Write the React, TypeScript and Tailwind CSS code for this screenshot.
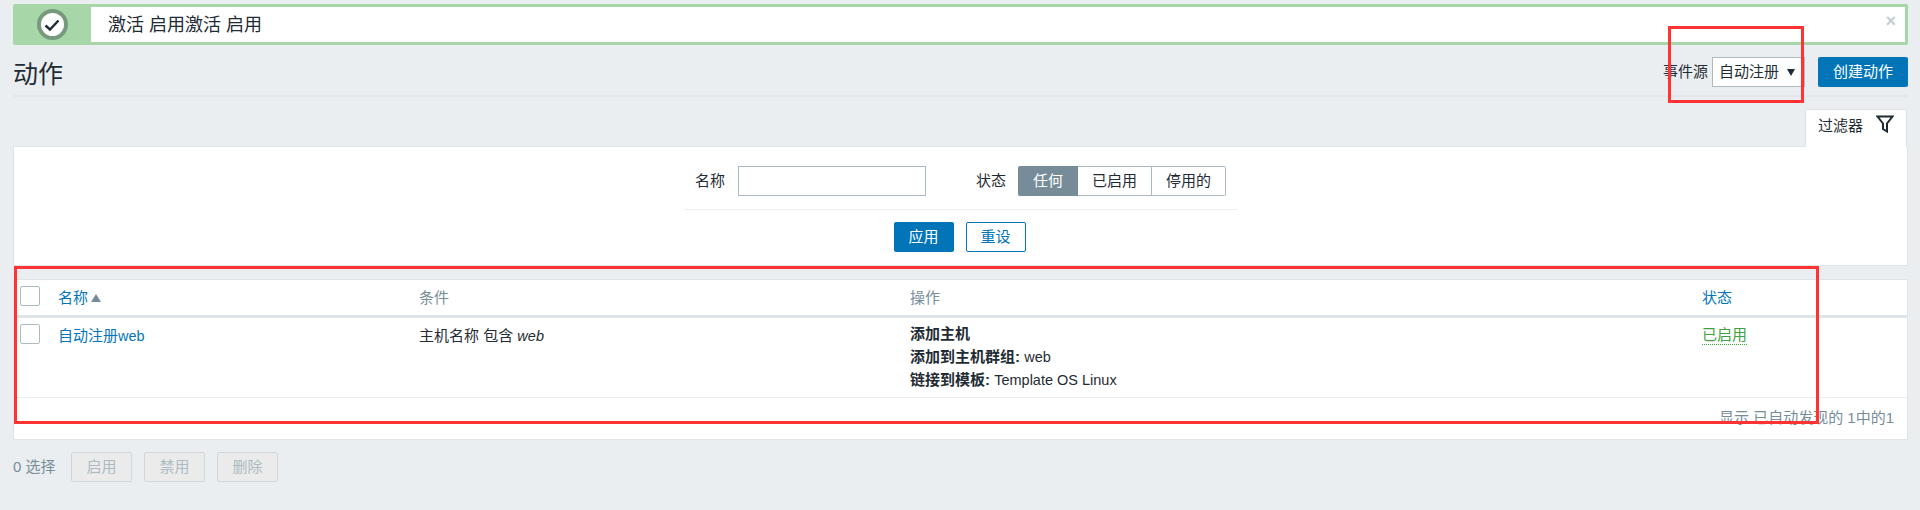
import React from 'react';

const font = "font-['Liberation_Sans','Noto_Sans_CJK_SC',sans-serif]";

function Checkbox() {
  return <div className="w-5 h-5 bg-white border border-[#acbbc2] rounded-[2px]" />;
}

function MessageBar() {
  return (
    <div className="h-[41px] mt-1 flex bg-[#a7d7a9] rounded-[2px] p-[3px] pl-0">
      <div className="w-[78px] shrink-0 flex items-center justify-center">
        <div className="w-[31px] h-[31px] rounded-full bg-white border-[4px] border-[#789a7c] flex items-center justify-center">
          <svg width="16" height="14" viewBox="0 0 16 14" fill="none" stroke="#1f2c33" strokeWidth="2.4">
            <path d="M1.5 7.5 L6 11.5 L14.5 2.5" />
          </svg>
        </div>
      </div>
      <div className="relative flex-1 bg-white flex items-center pl-[17px] pt-px text-[18px] text-[#1f2c33]">
        激活 启用激活 启用
        <span className="absolute right-[9px] top-[5px] text-[#c5ced3] text-[18px] font-bold leading-none">×</span>
      </div>
    </div>
  );
}

function PageHeader() {
  return (
    <div className="h-[52px] border-b-2 border-[#e3e7ea] flex items-start justify-between pt-3">
      <h1 className="text-[25px] leading-[32px] text-[#1f2c33] font-normal mt-px">动作</h1>
      <div className="flex items-center">
        <span className="text-[15px] text-[#1f2c33] mr-1">事件源</span>
        <div className="w-[93px] h-[30px] bg-white border border-[#acbbc2] flex items-center justify-between pl-[6px] pr-[9px] text-[15px] text-[#1f2c33]">
          自动注册
          <span className="w-0 h-0 border-x-[4px] border-x-transparent border-t-[7px] border-t-[#1f2c33]" />
        </div>
        <button className="ml-[13px] w-[90px] h-[30px] bg-[#0275b8] text-white text-[15px] rounded-[2px]">创建动作</button>
      </div>
    </div>
  );
}

function FilterPanel() {
  return (
    <div>
      <div className="flex justify-end pr-px -mb-px relative">
        <div className="w-[102px] h-[38px] bg-white border-t border-x border-[#dfe4e7] rounded-t-[2px] flex items-start pt-[5px] pl-3 gap-[13px] text-[15px] text-[#1f2c33]">
          过滤器
          <svg width="18" height="18" viewBox="0 0 18 18" fill="none" stroke="#1f2c33" strokeWidth="2">
            <path d="M1.5 1.5 H16.5 L11 8.5 V16.5 L7 14 V8.5 Z" />
          </svg>
        </div>
      </div>
      <div className="h-[120px] bg-white border border-[#dfe4e7] flex flex-col items-center pt-[19px]">
        <div className="w-[553px] h-[44px] pl-[11px] border-b border-[#ebeef0] flex items-start text-[15px] text-[#1f2c33]">
          <div className="h-[30px] flex items-center gap-[13px]">
            <span>名称</span>
            <div className="w-[188px] h-[30px] bg-white border border-[#acbbc2]" />
          </div>
          <div className="h-[30px] flex items-center ml-[50px] gap-3">
            <span>状态</span>
            <div className="flex h-[30px]">
              <div className="w-[60px] bg-[#768d99] text-white flex items-center justify-center rounded-l-[2px]">任何</div>
              <div className="w-[74px] border-y border-r border-[#acbbc2] flex items-center justify-center">已启用</div>
              <div className="w-[74px] border-y border-r border-[#acbbc2] flex items-center justify-center rounded-r-[2px]">停用的</div>
            </div>
          </div>
        </div>
        <div className="flex gap-3 mt-3 pr-[2px] text-[15px]">
          <button className="w-[60px] h-[30px] bg-[#0275b8] text-white rounded-[2px]">应用</button>
          <button className="w-[60px] h-[30px] bg-white text-[#0275b8] border border-[#0275b8] rounded-[2px]">重设</button>
        </div>
      </div>
    </div>
  );
}

function ActionTable() {
  const cols = 'grid grid-cols-[44px_361px_491px_792px_1fr]';
  return (
    <div className="mt-[13px] bg-white border border-[#dfe4e7] text-[15px]">
      <div className={`${cols} h-[38px] border-b-[3px] border-[#dfe4e7]`}>
        <div className="pl-[6px] pt-[6px]"><Checkbox /></div>
        <div className="pt-[7px] text-[#0275b8] flex items-start gap-[3px]">
          名称
          <span className="mt-[7px] w-0 h-0 border-x-[5px] border-x-transparent border-b-[8px] border-b-[#768d99]" />
        </div>
        <div className="pt-[7px] text-[#768d99]">条件</div>
        <div className="pt-[7px] text-[#768d99]">操作</div>
        <div className="pt-[7px] text-[#0275b8]">状态</div>
      </div>
      <div className={`${cols} h-[80px] border-b border-[#ebeef0] text-[#1f2c33]`}>
        <div className="pl-[6px] pt-[6px]"><Checkbox /></div>
        <div className="pt-[7px] text-[#0275b8]">自动注册<span className="text-[14.5px]">web</span></div>
        <div className="pt-[7px]">主机名称 包含 <em className="text-[14.5px]">web</em></div>
        <div className="pt-[6px] leading-[23px] -mt-[2px]">
          <div className="font-bold">添加主机</div>
          <div><span className="font-bold">添加到主机群组:</span> <span className="text-[14.5px]">web</span></div>
          <div className="-mt-px"><span className="font-bold">链接到模板:</span> <span className="text-[14.5px]">Template OS Linux</span></div>
        </div>
        <div className="pt-[6px]">
          <span className="text-[#3fa142] border-b border-dotted border-[#3fa142] pb-px">已启用</span>
        </div>
      </div>
      <div className="h-[41px] flex items-center justify-end pr-[13px] text-[#768d99]">显示 已自动发现的 1中的1</div>
    </div>
  );
}

function BulkBar() {
  return (
    <div className="mt-3 flex items-center text-[15px] text-[#768d99]">
      <span className="w-[58px]">0 选择</span>
      {['启用', '禁用', '删除'].map((label) => (
        <button key={label} className="w-[61px] h-[30px] mr-[12px] border border-[#d0d7db] rounded-[2px] bg-[#ebebeb] text-[#acbbc2]">
          {label}
        </button>
      ))}
    </div>
  );
}

export default function App() {
  return (
    <div className={`relative min-h-screen bg-[#ebeef0] px-[13px] pr-3 overflow-hidden ${font}`}>
      <MessageBar />
      <PageHeader />
      <div className="mt-3">
        <FilterPanel />
        <ActionTable />
      </div>
      <BulkBar />
      {/* red annotation boxes on top of the screenshot */}
      <div className="absolute left-[1668px] top-[26px] w-[136px] h-[77px] border-[3px] border-[#ff3333] pointer-events-none" />
      <div className="absolute left-[14px] top-[266px] w-[1805px] h-[158px] border-[3px] border-[#ff3333] pointer-events-none" />
    </div>
  );
}
